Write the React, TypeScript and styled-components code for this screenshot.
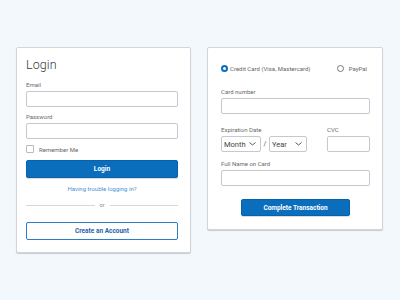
import React from "react";
import styled, { createGlobalStyle } from "styled-components";

const Global = createGlobalStyle`
  html, body { margin: 0; padding: 0; }
  body {
    width: 400px;
    height: 300px;
    background: #f3f8fd;
    font-family: Roboto, "Liberation Sans", Arial, sans-serif;
    color: #555;
    overflow: hidden;
  }
  * { box-sizing: border-box; }
`;

const Page = styled.div`
  display: flex;
  align-items: flex-start;
  gap: 16px;
  padding: 47px 0 0 16px;
`;

const Card = styled.div<{ $w: number; $h: number; $pad: string }>`
  width: ${(p) => p.$w}px;
  height: ${(p) => p.$h}px;
  padding: ${(p) => p.$pad};
  background: #fff;
  border: 1px solid #d2d5d9;
  border-radius: 2px;
  box-shadow: 0 1px 1px rgba(0, 0, 0, 0.18);
  display: flex;
  flex-direction: column;
`;

const Title = styled.div`
  font-size: 12.5px;
  line-height: 14px;
  color: #3a3a3a;
  font-weight: 300;
  letter-spacing: 0.1px;
`;

const Label = styled.div<{ $mt?: number }>`
  font-size: 6px;
  line-height: 8px;
  color: #6a6a6a;
  margin-top: ${(p) => p.$mt ?? 0}px;
  margin-bottom: 2px;
  white-space: nowrap;
`;

const Input = styled.div<{ $h?: number; $w?: number }>`
  height: ${(p) => p.$h ?? 16}px;
  width: ${(p) => (p.$w ? `${p.$w}px` : "100%")};
  border: 1px solid #c6c8cb;
  border-radius: 2px;
  background: #fff;
`;

const CheckRow = styled.div`
  display: flex;
  align-items: center;
  gap: 5px;
  margin-top: 6px;
  height: 8px;
  font-size: 6px;
  color: #666;
`;

const CheckBox = styled.div`
  width: 8px;
  height: 8px;
  border: 1px solid #b8babd;
  border-radius: 1px;
`;

const Button = styled.div<{ $variant?: "outline"; $mt: number; $w?: number; $h?: number }>`
  margin-top: ${(p) => p.$mt}px;
  height: ${(p) => p.$h ?? 18}px;
  width: ${(p) => (p.$w ? `${p.$w}px` : "100%")};
  align-self: center;
  display: flex;
  align-items: center;
  justify-content: center;
  font-size: 6.5px;
  font-weight: 700;
  border-radius: 2px;
  background: ${(p) => (p.$variant === "outline" ? "#fff" : "#0a6ebd")};
  color: ${(p) => (p.$variant === "outline" ? "#1d64a8" : "#fff")};
  border: 1px solid ${(p) => (p.$variant === "outline" ? "#2a7dc6" : "#0862ab")};
  box-shadow: ${(p) => (p.$variant === "outline" ? "none" : "0 1px 1px rgba(0,0,0,0.15)")};
`;

const Link = styled.div`
  margin-top: 7px;
  font-size: 6px;
  line-height: 8px;
  text-align: center;
  color: #4a92d4;
`;

const Divider = styled.div`
  margin-top: 8px;
  display: flex;
  align-items: center;
  gap: 5px;
  height: 8px;
  font-size: 5.5px;
  color: #888;
  &::before, &::after {
    content: "";
    flex: 1;
    height: 1px;
    background: #d4d6d9;
  }
`;

const RadioRow = styled.div`
  display: flex;
  justify-content: space-between;
  align-items: center;
  height: 8px;
  padding-right: 3px;
`;

const RadioItem = styled.div`
  display: flex;
  align-items: center;
  gap: 2px;
  font-size: 6px;
  color: #666;
  white-space: nowrap;
`;

const Radio = styled.div<{ $checked?: boolean }>`
  width: 7px;
  height: 7px;
  border-radius: 50%;
  border: ${(p) => (p.$checked ? "2px solid #0a6ebd" : "1px solid #777")};
  background: #fff;
  margin-right: ${(p) => (p.$checked ? 0 : 3)}px;
`;

const ExpRow = styled.div`
  display: flex;
  justify-content: space-between;
  margin-top: 12px;
`;

const Col = styled.div`
  display: flex;
  flex-direction: column;
`;

const SelectRow = styled.div`
  display: flex;
  align-items: center;
`;

const Select = styled.div<{ $w: number }>`
  width: ${(p) => p.$w}px;
  height: 16px;
  border: 1px solid #c6c8cb;
  border-radius: 2px;
  display: flex;
  align-items: center;
  justify-content: space-between;
  padding: 0 4px 0 2px;
  font-size: 7.5px;
  color: #444;
`;

const Slash = styled.span`
  font-size: 7px;
  color: #555;
  width: 8px;
  text-align: center;
`;

const Chevron = () => (
  <svg width="7" height="4" viewBox="0 0 7 4">
    <path d="M0.5 0.5 L3.5 3 L6.5 0.5" fill="none" stroke="#444" strokeWidth="0.9" />
  </svg>
);

export default function App() {
  return (
    <>
      <Global />
      <Page>
        <Card $w={175} $h={206} $pad="10px 12px 12px 9px">
          <Title>Login</Title>
          <Label $mt={9}>Email</Label>
          <Input />
          <Label $mt={6}>Password</Label>
          <Input />
          <CheckRow>
            <CheckBox />
            Remember Me
          </CheckRow>
          <Button $mt={7}>Login</Button>
          <Link>Having trouble logging in?</Link>
          <Divider>or</Divider>
          <Button $mt={13} $variant="outline">Create an Account</Button>
        </Card>
        <Card $w={176} $h={183} $pad="16px 12px 13px 13px">
          <RadioRow>
            <RadioItem>
              <Radio $checked />
              Credit Card (Visa, Mastercard)
            </RadioItem>
            <RadioItem>
              <Radio />
              PayPal
            </RadioItem>
          </RadioRow>
          <Label $mt={16}>Card number</Label>
          <Input />
          <ExpRow>
            <Col>
              <Label>Expiration Date</Label>
              <SelectRow>
                <Select $w={40}>
                  Month
                  <Chevron />
                </Select>
                <Slash>/</Slash>
                <Select $w={38}>
                  Year
                  <Chevron />
                </Select>
              </SelectRow>
            </Col>
            <Col>
              <Label>CVC</Label>
              <Input $w={43} />
            </Col>
          </ExpRow>
          <Label $mt={8}>Full Name on Card</Label>
          <Input />
          <Button $mt={13} $w={109} $h={17}>Complete Transaction</Button>
        </Card>
      </Page>
    </>
  );
}
